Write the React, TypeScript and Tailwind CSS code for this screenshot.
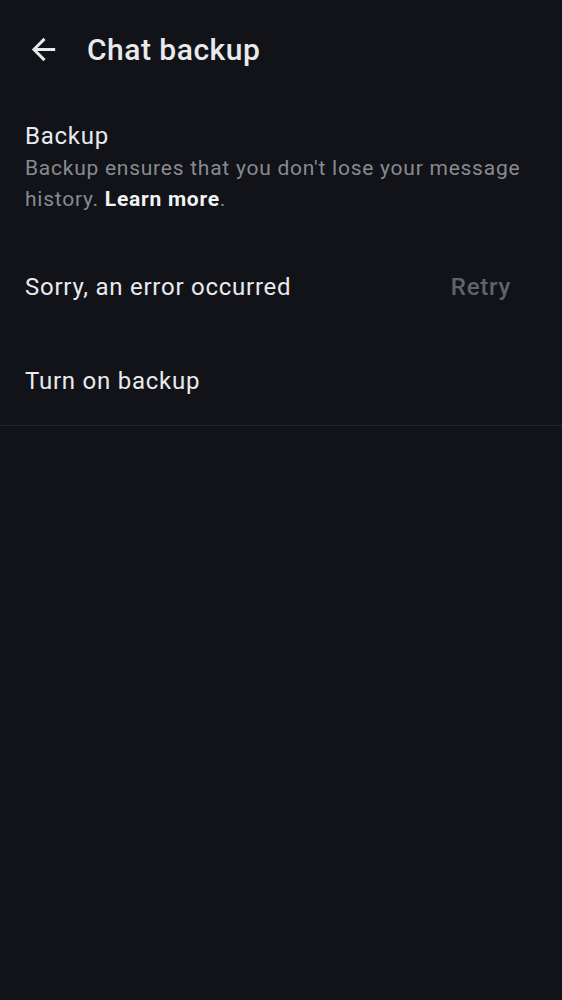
export default function App() {
  return (
    <div className="min-h-[1000px] w-full bg-[#111318] text-[#e9eaee]" style={{ fontFamily: 'Roboto, "Noto Sans", sans-serif' }}>
      {/* top bar */}
      <div className="flex h-[98px] items-center pl-[26px]">
        <svg width="35" height="35" viewBox="0 0 24 24" fill="#e9eaee">
          <path d="M20 11H7.83l5.59-5.59L12 4l-8 8 8 8 1.41-1.41L7.83 13H20v-2z" />
        </svg>
        <h1 className="ml-[26px] text-[30px] font-medium tracking-[0.5px]">Chat backup</h1>
      </div>

      {/* intro */}
      <div className="px-[25px] pt-[22px]">
        <div className="text-[24px] leading-[32px] tracking-[0.75px]">Backup</div>
        <p className="mt-[1px] text-[21px] leading-[31px] tracking-[0.75px] text-[#868b93]">
          Backup ensures that you don't lose your message history.{' '}
          <span className="font-bold text-[#f2f3f5]">Learn more</span>.
        </p>
      </div>

      {/* status row */}
      <div className="mt-[54px] flex items-center justify-between px-[25px]">
        <span className="text-[24px] tracking-[0.75px]">Sorry, an error occurred</span>
        <span className="pr-[26px] text-[24px] font-medium tracking-[0.75px] text-[#5f636b]">Retry</span>
      </div>

      <div className="mt-[58px] px-[25px] text-[24px] tracking-[0.75px]">Turn on backup</div>

      <div className="mt-[26px] border-b border-[#24272c]" />
    </div>
  );
}
